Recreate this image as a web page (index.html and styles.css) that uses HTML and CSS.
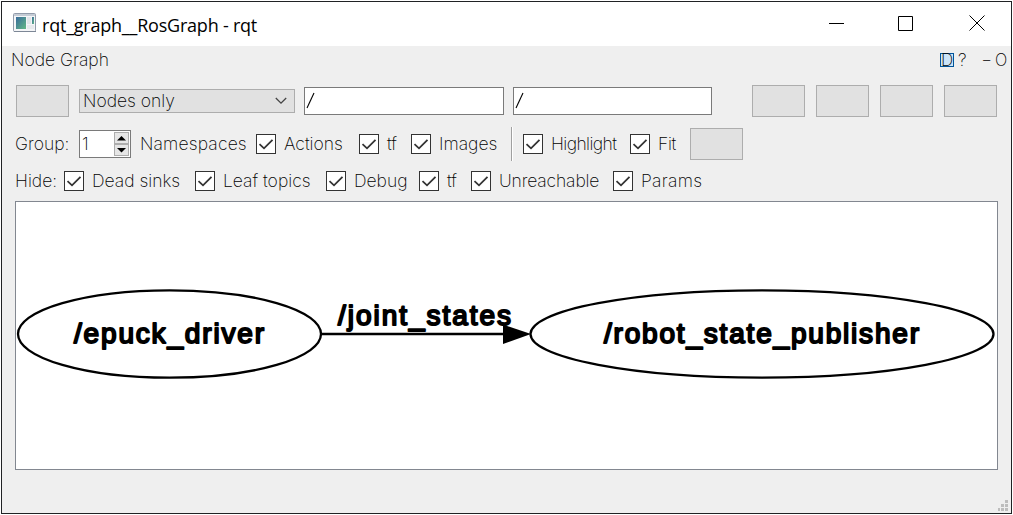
FILE: index.html
```html
<!DOCTYPE html>
<html lang="en">
<head>
<meta charset="utf-8">
<title>rqt_graph__RosGraph - rqt</title>
<link rel="stylesheet" href="styles.css">
</head>
<body>
<svg class="defs" width="0" height="0"><symbol id="check" viewBox="0 0 18 18"><path d="M2.500 9.200 7 13.300 15.500 4.800" fill="none" stroke="#333" stroke-width="1.800"/></symbol></svg>
<div class="window">
  <header class="titlebar">
    <svg class="app-icon" width="24" height="20" viewBox="0 0 24 20">
      <defs><linearGradient id="pane" x1="0" y1="0" x2="1" y2="1"><stop offset="0" stop-color="#386b9c"/><stop offset="1" stop-color="#64b985"/></linearGradient></defs>
      <rect x=".5" y=".5" width="22" height="18" rx="1" fill="#f4f5f7" stroke="#929baa"/>
      <path d="M1 2h21" stroke="#c5ccd5" stroke-width="2"/>
      <rect x="3" y="4" width="10" height="12" fill="url(#pane)"/>
      <rect x="14" y="4" width="4" height="7" fill="#e2e5e9"/><rect x="14" y="12" width="7" height="4" fill="#e7e9ec"/>
      <rect x="19" y="4" width="2" height="7" fill="url(#pane)"/>
      <path d="M1 18.500h22" stroke="#7d8796"/>
    </svg>
    <h1 class="title">rqt_graph__RosGraph - rqt</h1>
    <svg class="controls" width="156" height="16" viewBox="0 0 156 16">
      <g fill="none" stroke="#000"><path d="M0 8.500h15M69.500 1.500h14v14h-14z"/><path d="M140.500 .5l15 15M155.500 .5l-15 15"/></g>
    </svg>
  </header>
  <div class="dock">
    <span class="dock-title">Node Graph</span>
    <span class="dock-d">D</span><span class="dock-help">?</span><span class="dock-min">-</span><span class="dock-o">O</span>
  </div>
  <div class="toolbar">
    <span class="button"></span>
    <div class="combo"><span class="label nodes">Nodes only</span><svg width="12" height="8" viewBox="0 0 12 8"><path d="M.8 1 6 6.200 11.200 1" fill="none" stroke="#444" stroke-width="1.300"/></svg></div>
    <div class="field"><svg width="10" height="18"><path d="M1 16 8 1" stroke="#000" stroke-width="1.100"/></svg></div>
    <div class="field"><svg width="10" height="18"><path d="M1 16 8 1" stroke="#000" stroke-width="1.100"/></svg></div>
    <span class="button"></span><span class="button"></span><span class="button"></span><span class="button"></span>
  </div>
  <div class="group-row">
    <span class="label group">Group:</span>
    <div class="spin"><span class="label">1</span><div class="arrows"><svg viewBox="0 0 13 10"><path d="M2 7.500 6.500 3 11 7.500z"/></svg><svg viewBox="0 0 13 10"><path d="M2 3 6.500 7.500 11 3z"/></svg></div></div>
    <span class="label namespaces">Namespaces</span>
    <div class="option"><svg class="box"><use href="#check"/></svg><span class="label actions">Actions</span></div>
    <div class="option"><svg class="box"><use href="#check"/></svg><span class="label">tf</span></div>
    <div class="option"><svg class="box"><use href="#check"/></svg><span class="label images">Images</span></div>
    <span class="separator"></span>
    <div class="option"><svg class="box"><use href="#check"/></svg><span class="label highlight">Highlight</span></div>
    <div class="option"><svg class="box"><use href="#check"/></svg><span class="label fit">Fit</span></div>
    <span class="button"></span>
  </div>
  <div class="hide-row">
    <span class="label hide">Hide:</span>
    <div class="option"><svg class="box"><use href="#check"/></svg><span class="label dead">Dead sinks</span></div>
    <div class="option"><svg class="box"><use href="#check"/></svg><span class="label leaf">Leaf topics</span></div>
    <div class="option"><svg class="box"><use href="#check"/></svg><span class="label debug">Debug</span></div>
    <div class="option"><svg class="box"><use href="#check"/></svg><span class="label">tf</span></div>
    <div class="option"><svg class="box"><use href="#check"/></svg><span class="label unreach">Unreachable</span></div>
    <div class="option"><svg class="box"><use href="#check"/></svg><span class="label params">Params</span></div>
  </div>
  <main class="graph">
    <svg width="981" height="267" viewBox="16 202 981 267">
      <g fill="none" stroke="#000" stroke-width="2.300"><ellipse cx="169.500" cy="334" rx="151.500" ry="43.700"/><ellipse cx="762" cy="334" rx="231.500" ry="43.700"/><path d="M321 334h184"/></g>
      <path d="M503 324.500 531 334 503 344z"/>
      <g class="graph-text"><text x="74" y="343" textLength="190">/epuck_driver</text><text x="338" y="324.500" textLength="173">/joint_states</text><text x="604" y="343" textLength="315">/robot_state_publisher</text></g>
    </svg>
  </main>
  <footer class="statusbar"><svg width="11" height="12" viewBox="0 0 11 12" fill="#bdbdbd"><path d="M7 0h3v3h-3zM3 4h3v3h-3zM7 4h3v3h-3zM0 8h2v3h-2zM3 8h3v3h-3zM7 8h3v3h-3z"/></svg></footer>
</div>
</body>
</html>
```
FILE: styles.css
```css
* { box-sizing: border-box; }
body { margin: 0; padding: 1px; background: #fff; width: 1013px; height: 515px; overflow: hidden; }
.defs { display: none; }
.window { width: 1011px; height: 513px; border: 1px solid #202224; background: #efefef; display: flex; flex-direction: column; font: 200 17.5px/22px Inter, sans-serif; color: #000; }
.titlebar { height: 44px; flex: none; background: #fff; display: flex; align-items: flex-start; padding: 11px 26px 0 11px; }
.app-icon { flex: none; }
.title { margin: 0 0 0 5px; font: 400 18px/24px "Open Sans", "Noto Sans", sans-serif; letter-spacing: -.22px; white-space: nowrap; }
.controls { margin: 2px 0 0 auto; }
.dock { height: 28px; flex: none; display: flex; align-items: center; padding-left: 9px; white-space: nowrap; }
.dock-title { width: 929px; }
.dock-d { width: 14px; height: 14px; border: 1px solid #005499; background: #cce4f7; line-height: 12px; font-size: 17px; text-align: center; }
.dock-help { width: 14px; margin-left: 4px; }
.dock-min { width: 12px; margin-left: 9px; transform: scaleX(1.45); transform-origin: left; }
.dock-o { margin-left: 2px; transform: scaleX(.93); transform-origin: left; }
.label { white-space: nowrap; }
.button { width: 53px; height: 32px; border: 1px solid #adadad; background: #e1e1e1; }
.toolbar { height: 54px; flex: none; display: grid; grid-template-columns: 63px 225px 209px 239px repeat(4, 64px); align-items: center; padding: 0 0 0 14px; }
.combo { width: 216px; height: 24px; border: 1px solid #adadad; background: #e1e1e1; display: flex; align-items: center; justify-content: space-between; padding: 0 7px 0 3px; }
.field { width: 200px; height: 28px; border: 1px solid #7a7a7a; background: #fff; padding: 4px 1px; }
.field svg { display: block; }
.field + .field { width: 199px; }
.group-row { height: 34px; margin-top: -1px; flex: none; display: grid; grid-template-columns: 64px 61px 116px 103px 52px 100px 12px 107px 60px 53px; align-items: center; padding-left: 13px; }
.spin { width: 52px; height: 28px; border: 1px solid #7a7a7a; background: #fff; display: flex; align-items: center; justify-content: space-between; padding-left: 2px; }
.arrows { width: 15px; height: 24px; margin-right: 1px; display: grid; grid-template-rows: 12px 12px; }
.arrows svg { width: 15px; height: 12px; border: 1px solid #adadad; background: #e6e6e6; }
.option { display: flex; align-items: center; gap: 8px; }
.box { width: 20px; height: 20px; border: 1px solid #333; background: #fff; flex: none; }
.namespaces { letter-spacing: .15px; }
.highlight { letter-spacing: -.6px; }
.fit { letter-spacing: -.3px; }
.unreach { letter-spacing: -.15px; }
.params { letter-spacing: .3px; }
.separator { width: 2px; height: 34px; border-left: 1px solid #a0a0a0; border-right: 1px solid #fff; }
.hide-row { height: 40px; flex: none; display: grid; grid-template-columns: 49px 131px 131px 93px 52px 142px 110px; align-items: center; padding-left: 13px; }
.graph { width: 983px; height: 269px; flex: none; border: 1px solid #828790; background: #fff; margin-left: 13px; }
.graph svg { display: block; }
.graph-text { font: 400 28px "Liberation Sans", sans-serif; fill: #000; stroke: #000; stroke-width: 1.9px; stroke-linejoin: round; }
.statusbar { flex: 1; display: flex; justify-content: flex-end; align-items: flex-end; padding: 0 2px 1px 0; }
```
